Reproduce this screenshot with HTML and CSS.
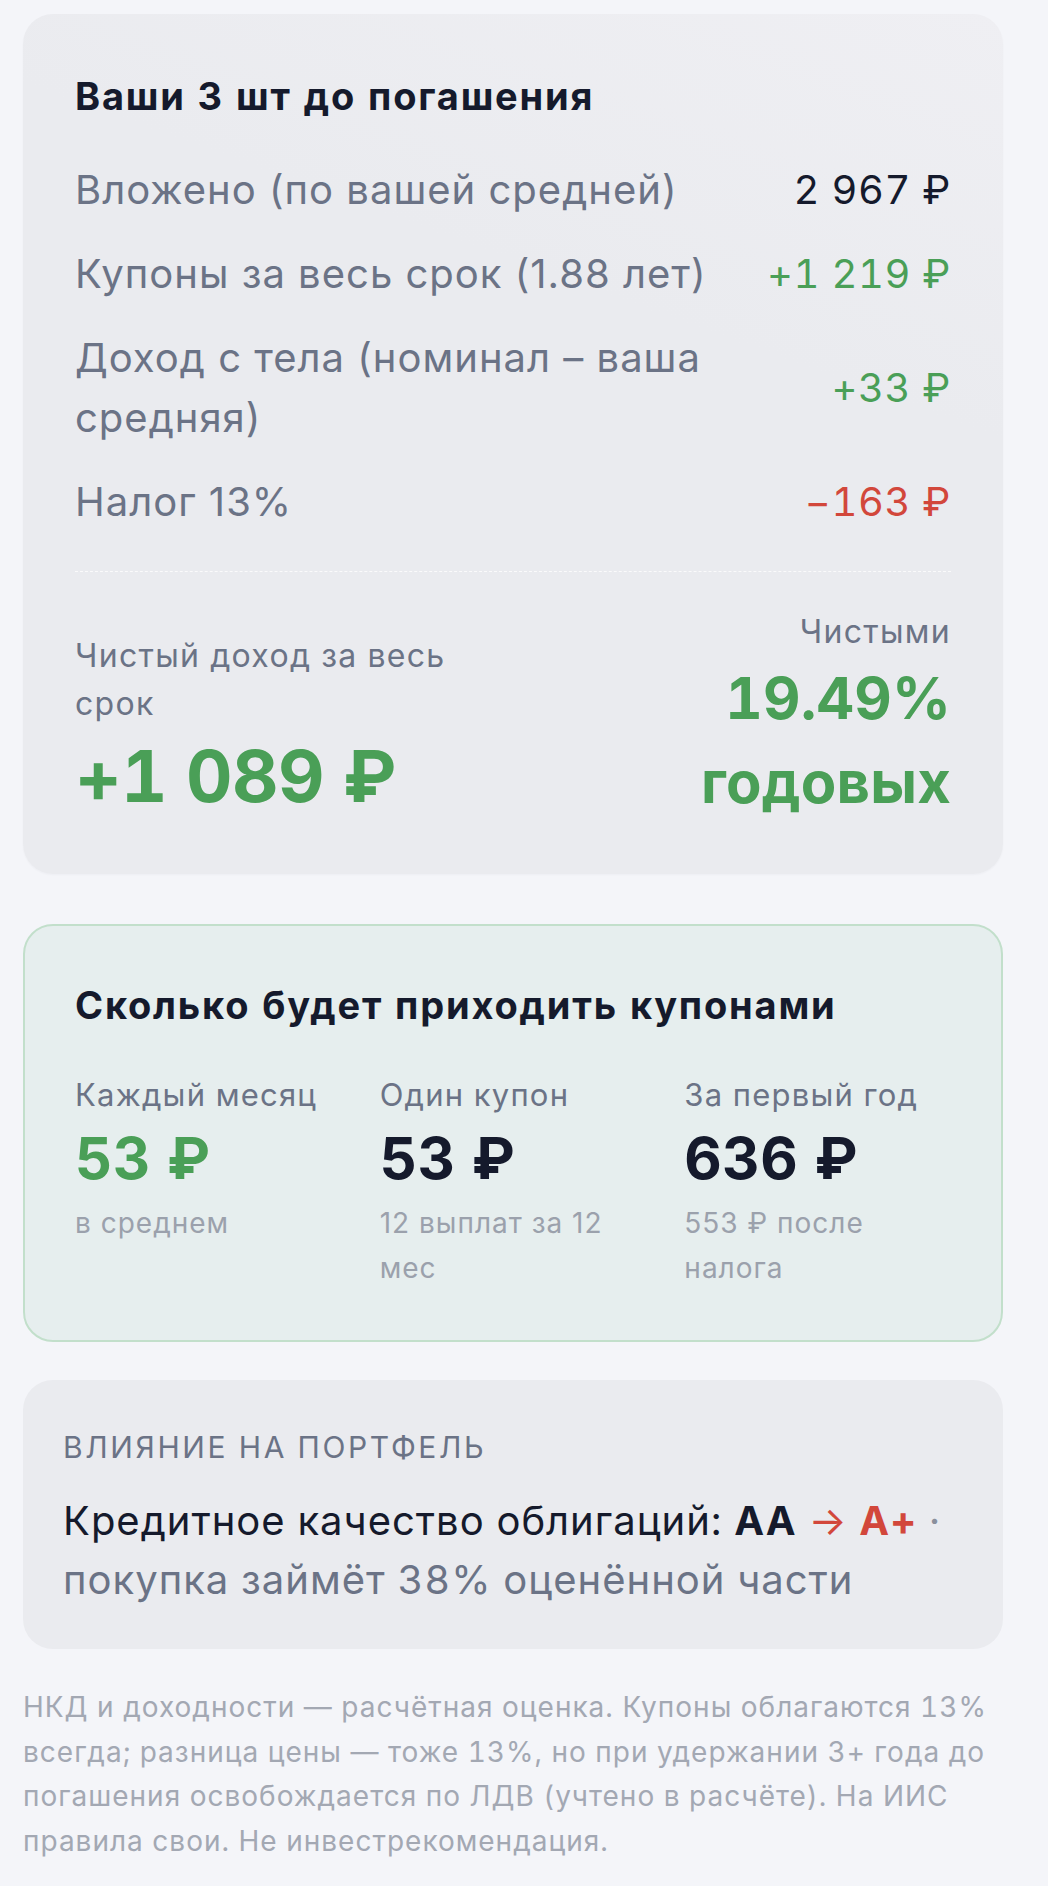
FILE: index.html
```html
<!DOCTYPE html>
<html lang="ru">
<head>
<meta charset="utf-8">
<title>Доходность</title>
<link rel="stylesheet" href="styles.css">
</head>
<body>
<main class="page">
  <section class="card card-main">
    <h2 class="card-title">Ваши 3 шт до погашения</h2>
    <div class="rows">
      <div class="row"><span class="row-label">Вложено (по вашей средней)</span><span class="row-value">2 967 ₽</span></div>
      <div class="row"><span class="row-label">Купоны за весь срок (1.88 лет)</span><span class="row-value pos">+1 219 ₽</span></div>
      <div class="row"><span class="row-label">Доход с тела (номинал – ваша средняя)</span><span class="row-value pos">+33 ₽</span></div>
      <div class="row"><span class="row-label">Налог 13%</span><span class="row-value neg">−163 ₽</span></div>
    </div>
    <div class="divider"></div>
    <div class="summary">
      <div class="summary-left">
        <div class="summary-label">Чистый доход за весь срок</div>
        <div class="summary-big">+1 089 ₽</div>
      </div>
      <div class="summary-right">
        <div class="summary-label">Чистыми</div>
        <div class="summary-rate">19.49% годовых</div>
      </div>
    </div>
  </section>

  <section class="card card-coupons">
    <h2 class="card-title">Сколько будет приходить купонами</h2>
    <div class="coupon-grid">
      <div class="coupon">
        <div class="coupon-label">Каждый месяц</div>
        <div class="coupon-value pos">53 ₽</div>
        <div class="coupon-sub">в среднем</div>
      </div>
      <div class="coupon">
        <div class="coupon-label">Один купон</div>
        <div class="coupon-value">53 ₽</div>
        <div class="coupon-sub">12 выплат за 12 мес</div>
      </div>
      <div class="coupon">
        <div class="coupon-label">За первый год</div>
        <div class="coupon-value">636 ₽</div>
        <div class="coupon-sub">553 ₽ после налога</div>
      </div>
    </div>
  </section>

  <section class="card card-impact">
    <div class="impact-head">ВЛИЯНИЕ НА ПОРТФЕЛЬ</div>
    <p class="impact-text"><span class="dark">Кредитное качество облигаций: <b>AA</b></span> <span class="neg arrow">→</span> <b class="neg">A+</b> <span class="dot">·</span> покупка займёт 38% оценённой части</p>
  </section>

  <p class="footnote">НКД и доходности — расчётная оценка. Купоны облагаются 13% всегда; разница цены — тоже 13%, но при удержании 3+ года до погашения освобождается по ЛДВ (учтено в расчёте). На ИИС правила свои. Не инвестрекомендация.</p>
</main>
</body>
</html>
```

FILE: styles.css
```css
* { box-sizing: border-box; }

html, body {
  margin: 0;
  padding: 0;
  background: #f4f5f9;
}

body {
  font-family: Inter, "Noto Sans", "Liberation Sans", sans-serif;
  font-variant-numeric: tabular-nums;
  color: #151a2c;
}

.page {
  width: 1048px;
  padding: 14px 45px 0 23px;
}

.card {
  border-radius: 30px;
  background: #eaebef;
}

.card-main {
  padding: 57px 52px 50px;
  background: linear-gradient(200deg, #efeff3 0%, #eaebef 35%, #eaebef 100%);
  box-shadow: 0 1px 2px rgba(20, 30, 60, 0.03);
}

.card-title {
  margin: 0 0 39px;
  font-size: 38px;
  line-height: 50px;
  font-weight: 700;
  color: #151a2c;
  letter-spacing: 1.8px;
}

.rows {
  display: flex;
  flex-direction: column;
  gap: 24px;
}

.row {
  display: flex;
  align-items: center;
  justify-content: space-between;
  gap: 40px;
  font-size: 40px;
  line-height: 60px;
}

.row-label {
  color: #6b7386;
  max-width: 680px;
  letter-spacing: 1px;
  font-variant-numeric: proportional-nums;
}

.row-value {
  white-space: nowrap;
  color: #151a2c;
  letter-spacing: 0.6px;
}

.pos { color: #4a9f57; }
.neg { color: #d2473b; }

.divider {
  margin-top: 39px;
  border-top: 1px dashed rgba(255, 255, 255, 0.75);
}

.summary {
  display: flex;
  justify-content: space-between;
  align-items: flex-end;
  padding-top: 36px;
}

.summary-left {
  width: 420px;
  padding-bottom: 5px;
}

.summary-label {
  font-size: 32px;
  line-height: 48px;
  letter-spacing: 1.3px;
  color: #6b7386;
}

.summary-big {
  margin-top: 5px;
  font-size: 72px;
  line-height: 86px;
  font-weight: 700;
  color: #4a9f57;
  letter-spacing: -0.5px;
}

.summary-right {
  width: 300px;
  text-align: right;
}

.summary-rate {
  font-size: 58px;
  line-height: 84px;
  font-weight: 700;
  color: #4a9f57;
  letter-spacing: 0.2px;
}

.card-coupons {
  margin-top: 50px;
  padding: 54px 50px 50px;
  background: #e6eeee;
  border: 2px solid #c2dfcb;
}

.card-coupons .card-title {
  margin-bottom: 43px;
}

.coupon-grid {
  display: grid;
  grid-template-columns: repeat(3, 1fr);
  gap: 38px;
}

.coupon-label {
  font-size: 31px;
  line-height: 43px;
  letter-spacing: 1.2px;
  color: #6b7386;
}

.coupon-value {
  margin-top: 7px;
  font-size: 58px;
  line-height: 70px;
  font-weight: 700;
  color: #151a2c;
  letter-spacing: 0.5px;
}

.coupon-value.pos { color: #4a9f57; }

.coupon-sub {
  margin-top: 8px;
  font-size: 28px;
  line-height: 44.5px;
  letter-spacing: 1px;
  color: #9ba1ac;
  font-variant-numeric: proportional-nums;
}

.card-impact {
  margin-top: 38px;
  padding: 46px 40px 40px;
}

.impact-head {
  font-size: 30px;
  line-height: 43px;
  color: #6b7386;
  letter-spacing: 2.6px;
}

.impact-text {
  margin: 23px 0 0;
  font-size: 40px;
  line-height: 58.5px;
  letter-spacing: 1px;
  color: #6b7386;
}

.impact-text .dark { color: #151a2c; }
.impact-text b { font-weight: 700; }
.impact-text .dot { color: #8a909c; }

.footnote {
  margin: 36px 0 0;
  font-size: 28px;
  line-height: 44.5px;
  letter-spacing: 1px;
  color: #a3a8b3;
}
```
